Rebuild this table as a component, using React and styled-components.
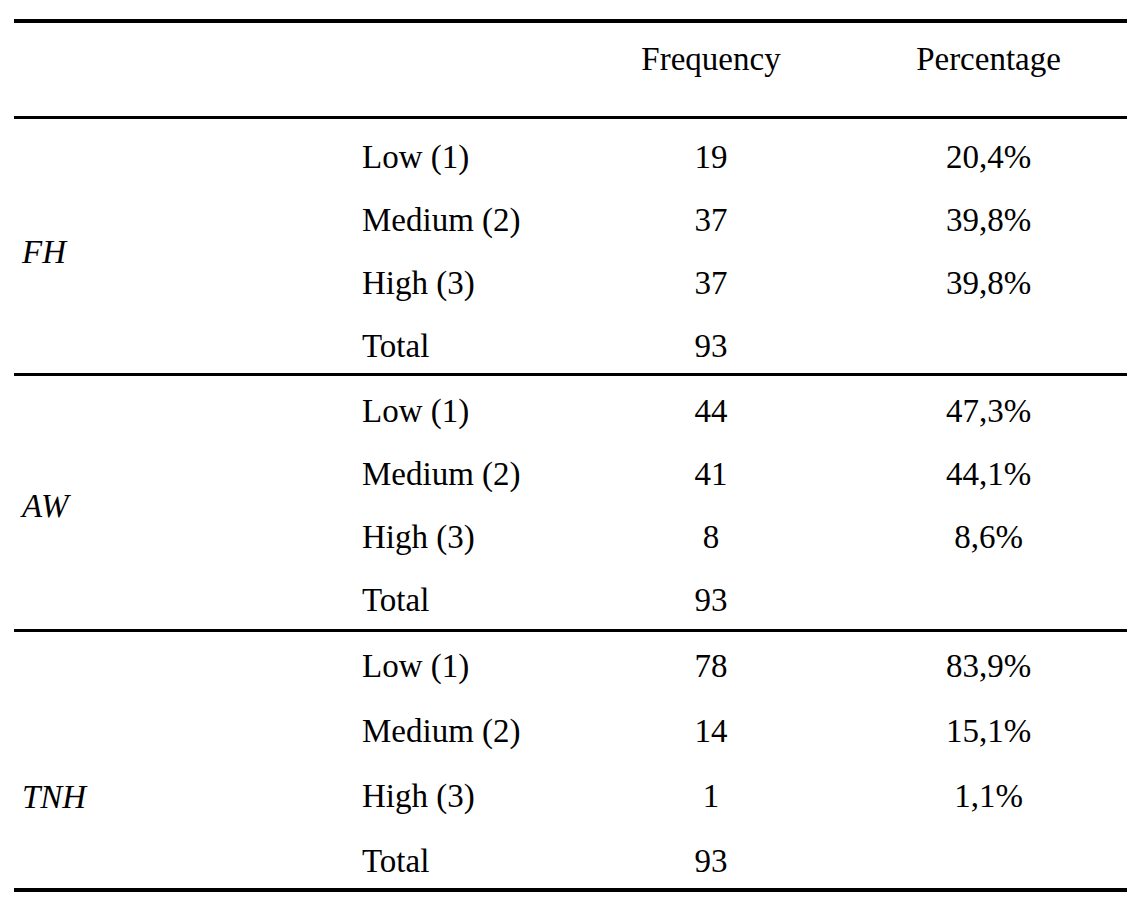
import React from "react";
import styled, { createGlobalStyle } from "styled-components";

const GlobalStyle = createGlobalStyle`
  body {
    margin: 0;
    background: #ffffff;
    font-family: "Liberation Serif", "Times New Roman", serif;
    color: #000000;
  }
`;

const Page = styled.div`
  padding: 19px 9px 0 14px;
`;

const Table = styled.div`
  width: 1113px;
  border-top: 4px solid #000;
  border-bottom: 4px solid #000;
  font-size: 33px;
`;

const Cols = `
  display: grid;
  grid-template-columns: 348px 210px 278px 277px;
`;

const HeadRow = styled.div`
  ${Cols}
  height: 96px;
  border-bottom: 3px solid #000;
  line-height: 40px;
  padding-top: 16px;
  box-sizing: border-box;
`;

const HeadCell = styled.div`
  text-align: center;
`;

const Group = styled.div`
  ${Cols}
  grid-template-rows: repeat(4, ${(p) => p.$rowH}px);
  padding-top: ${(p) => p.$pad}px;
  height: ${(p) => p.$h}px;
  box-sizing: border-box;
  border-bottom: ${(p) => (p.$last ? "none" : "3px solid #000")};
`;

const Label = styled.div`
  grid-column: 1;
  grid-row: ${(p) => p.$row};
  align-self: center;
  padding-left: 8px;
  font-style: italic;
  line-height: 40px;
`;

const Cell = styled.div`
  grid-column: ${(p) => p.$col};
  grid-row: ${(p) => p.$row};
  line-height: ${(p) => p.$rowH}px;
  text-align: ${(p) => (p.$col === 2 ? "left" : "center")};
`;

const groups = [
  {
    label: "FH",
    labelRow: "1 / span 4",
    h: 257,
    pad: 7,
    rowH: 63,
    rows: [
      ["Low (1)", "19", "20,4%"],
      ["Medium (2)", "37", "39,8%"],
      ["High (3)", "37", "39,8%"],
      ["Total", "93", ""],
    ],
  },
  {
    label: "AW",
    labelRow: "1 / span 4",
    h: 256,
    pad: 4,
    rowH: 63,
    rows: [
      ["Low (1)", "44", "47,3%"],
      ["Medium (2)", "41", "44,1%"],
      ["High (3)", "8", "8,6%"],
      ["Total", "93", ""],
    ],
  },
  {
    label: "TNH",
    labelRow: "3",
    h: 256,
    pad: 2,
    rowH: 65,
    rows: [
      ["Low (1)", "78", "83,9%"],
      ["Medium (2)", "14", "15,1%"],
      ["High (3)", "1", "1,1%"],
      ["Total", "93", ""],
    ],
  },
];

export default function App() {
  return (
    <>
      <GlobalStyle />
      <Page>
        <Table>
          <HeadRow>
            <div />
            <div />
            <HeadCell>Frequency</HeadCell>
            <HeadCell>Percentage</HeadCell>
          </HeadRow>
          {groups.map((g, i) => (
            <Group
              key={g.label}
              $h={g.h}
              $pad={g.pad}
              $rowH={g.rowH}
              $last={i === groups.length - 1}
            >
              <Label $row={g.labelRow}>{g.label}</Label>
              {g.rows.map((r, j) =>
                r.map((text, k) => (
                  <Cell key={`${j}-${k}`} $col={k + 2} $row={j + 1} $rowH={g.rowH}>
                    {text}
                  </Cell>
                ))
              )}
            </Group>
          ))}
        </Table>
      </Page>
    </>
  );
}
